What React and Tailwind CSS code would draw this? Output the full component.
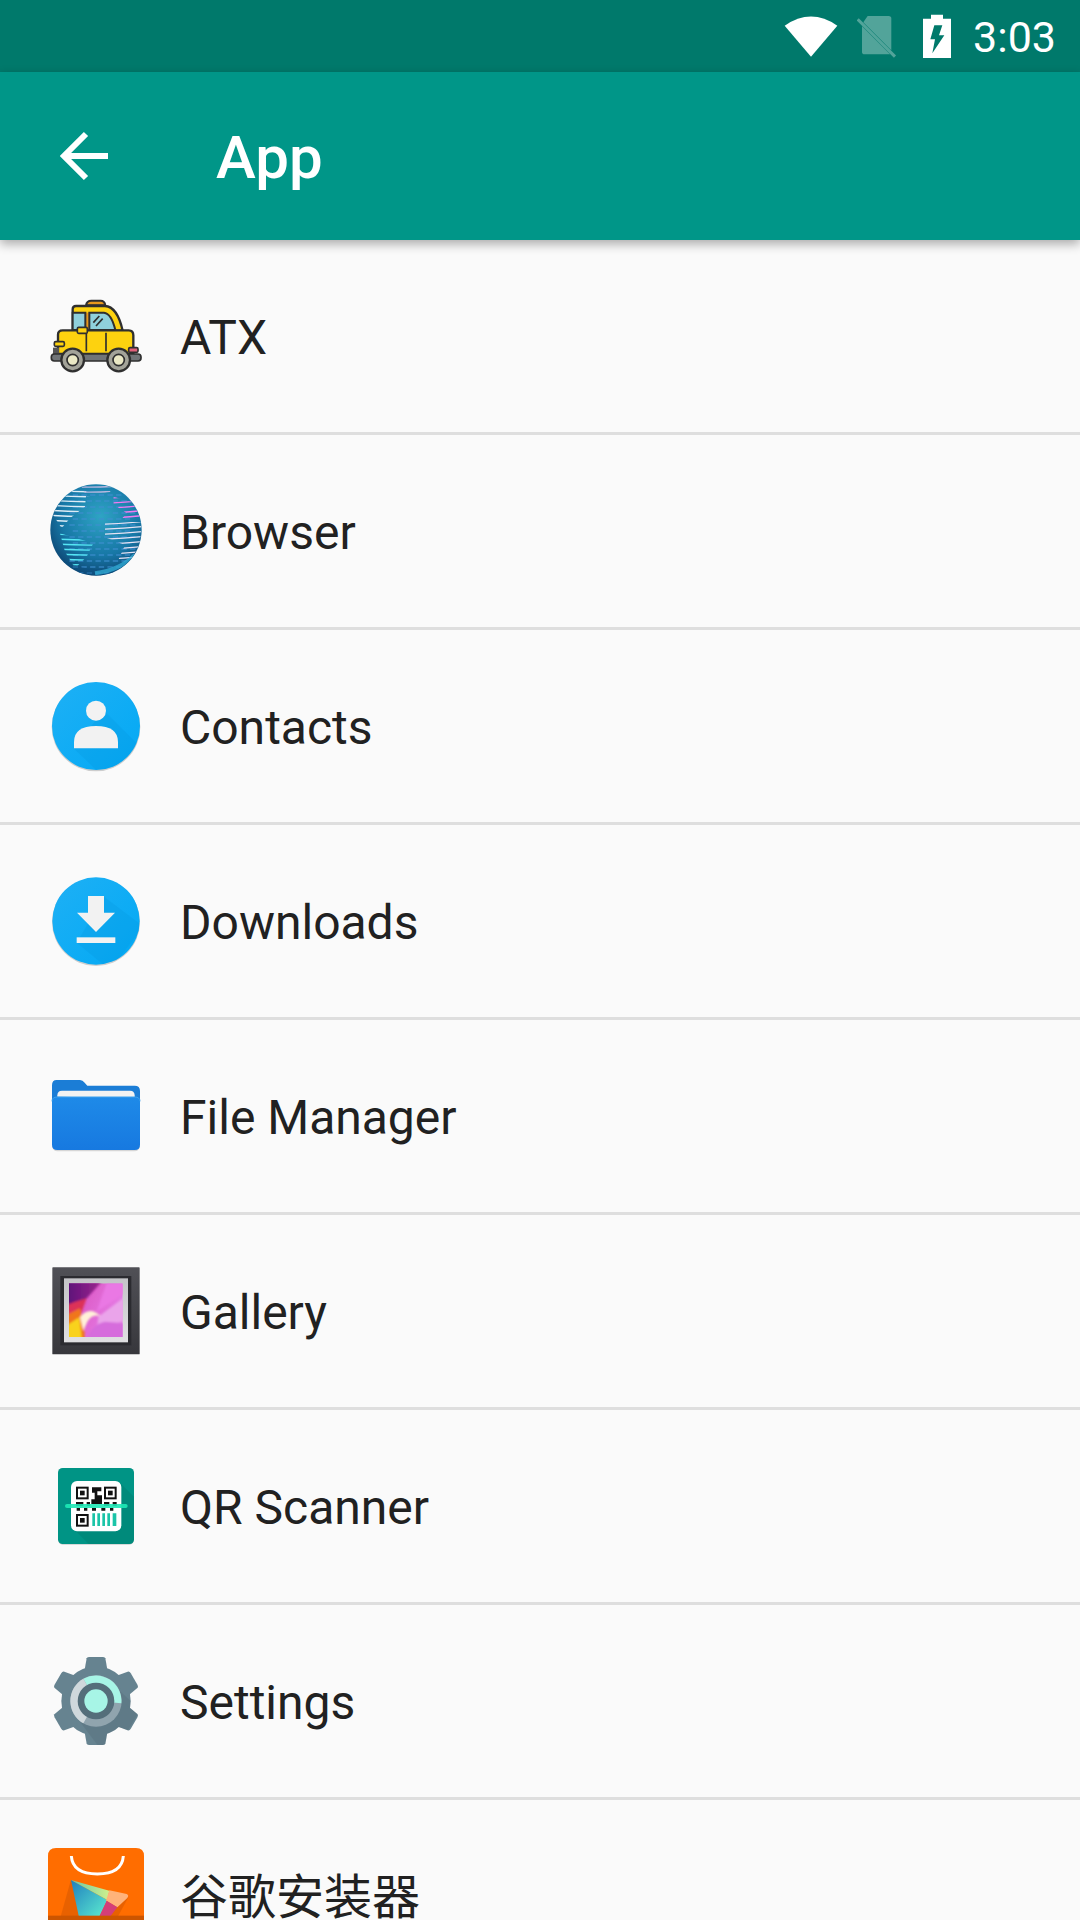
const FONT = 'font-["Roboto","Noto_Sans_CJK_SC",sans-serif]';

function Icon({ vb, children }) {
  return (
    <svg width="120" height="120" viewBox={vb} className="shrink-0 overflow-visible">
      {children}
    </svg>
  );
}

function Wifi() {
  return (
    <svg width="54" height="44" viewBox="0 0 162 132" className="shrink-0">
      <path d="M2 35 Q81 -20 160 35 L81 128 Z" fill="#fff" />
    </svg>
  );
}
function Sim() {
  return (
    <svg width="42" height="44" viewBox="0 0 126 132" className="shrink-0">
      <path d="M32 6 H95 Q103 6 103 14 V109 L19 25 Z" fill="#fff" fillOpacity="0.32" />
      <path d="M15 37 L99 121 H23 Q15 121 15 113 Z" fill="#fff" fillOpacity="0.32" />
      <path d="M2 16 L114 128" stroke="#fff" strokeOpacity="0.32" strokeWidth="9" />
    </svg>
  );
}
function Battery() {
  return (
    <svg width="28" height="44" viewBox="0 0 84 132" className="shrink-0">
      <path d="M0 14 H24 V2 H60 V14 H84 V132 H0 Z" fill="#fff" />
      <path d="M34 34 H58 L48 64 H64 L28 118 L36 76 H22 Z" fill="#00796b" />
    </svg>
  );
}

function Taxi() {
  const s = "#2f2f2f";
  return (
    <Icon vb="18 -12 360 360">
      <path d="M168 76 Q170 62 184 62 H212 Q224 62 226 76 Z" fill="#e8981d" stroke={s} strokeWidth="6" />
      <path d="M128 152 V88 Q128 78 138 78 H225 Q262 80 278 152 Z" fill="#fdd20f" stroke={s} strokeWidth="7" />
      <path d="M164 150 V98 H178 V150 Z" fill="#e8981d" />
      <path d="M128 98 H166 V150 H128 Z" fill="#8fd0dc" stroke={s} strokeWidth="6" />
      <path d="M178 98 H222 Q244 100 256 150 H178 Z" fill="#8fd0dc" stroke={s} strokeWidth="6" />
      <path d="M190 128 L208 108 M198 138 L218 116" stroke={s} strokeWidth="5" />
      <path d="M84 222 V164 Q84 151 98 151 H296 Q310 151 310 166 V222 Z" fill="#fdd20f" stroke={s} strokeWidth="7" />
      <path d="M169 158 V214 M228 158 V214" stroke={s} strokeWidth="5" />
      <rect x="142" y="142" width="30" height="18" rx="4" fill="#fdd20f" stroke={s} strokeWidth="5" />
      <rect x="73" y="185" width="30" height="14" rx="4" fill="#fdd20f" stroke={s} strokeWidth="5" />
      <rect x="296" y="203" width="28" height="14" rx="4" fill="#e0607a" stroke={s} strokeWidth="5" />
      <rect x="69" y="203" width="18" height="20" fill="#555" />
      <rect x="64" y="222" width="269" height="21" rx="9" fill="#707477" stroke={s} strokeWidth="5" />
      <circle cx="128" cy="240" r="34" fill="#a3a399" stroke={s} strokeWidth="7" />
      <circle cx="128" cy="240" r="17" fill="#ebe9c5" stroke={s} strokeWidth="5" />
      <circle cx="266" cy="240" r="34" fill="#a3a399" stroke={s} strokeWidth="7" />
      <circle cx="266" cy="240" r="17" fill="#ebe9c5" stroke={s} strokeWidth="5" />
    </Icon>
  );
}

function Stripes({ clip, from, to, color }) {
  const ys = [];
  for (let y = from; y <= to; y += 15) ys.push(y);
  return (
    <g clipPath={`url(#${clip})`}>
      {ys.map((y) => (
        <path key={y} d={`M50 ${y - 2} Q198 ${y + 10} 346 ${y - 6}`} stroke={color} strokeWidth="4" fill="none" />
      ))}
    </g>
  );
}

function Globe() {
  const dots = [];
  for (let y = 645; y < 880; y += 18) {
    for (let x = 110 + ((y / 18) % 2) * 10; x < 310; x += 26) {
      dots.push([x, y]);
    }
  }
  return (
    <Icon vb="18 573 360 360">
      <defs>
        <radialGradient id="gl" cx="0.55" cy="0.35" r="0.72">
          <stop offset="0" stopColor="#2ea4c4" />
          <stop offset="0.6" stopColor="#1777a6" />
          <stop offset="1" stopColor="#0b3a66" />
        </radialGradient>
        <clipPath id="gc"><circle cx="198" cy="750" r="136" /></clipPath>
        <clipPath id="g1"><path d="M130 628 L170 628 L165 680 L120 715 L95 745 L66 700 L90 650 Z" /></clipPath>
        <clipPath id="g2"><path d="M90 760 L190 790 L170 830 L135 865 L105 815 Z" /></clipPath>
        <clipPath id="g3"><path d="M250 650 L322 670 L335 722 L270 722 L290 700 L250 672 Z" /></clipPath>
        <clipPath id="g4"><path d="M225 726 L335 726 L330 790 L300 848 L265 840 L285 795 L225 772 Z" /></clipPath>
        <clipPath id="g5"><path d="M150 612 L250 612 L240 636 L170 650 Z" /></clipPath>
      </defs>
      <circle cx="198" cy="750" r="137" fill="url(#gl)" />
      <g clipPath="url(#gc)">
        {dots.map(([x, y], i) => (
          <path key={i} d={`M${x} ${y}h16`} stroke="#3f8fd0" strokeWidth="4" strokeOpacity="0.75" />
        ))}
        <Stripes clip="g1" from={632} to={745} color="#dcecf6" />
        <Stripes clip="g2" from={762} to={865} color="#55e6f4" />
        <Stripes clip="g3" from={652} to={722} color="#f07af0" />
        <Stripes clip="g4" from={730} to={850} color="#e6e2f4" />
        <Stripes clip="g5" from={618} to={650} color="#b8b8e0" />
        <path d="M62 810 Q200 925 334 810 V900 H62 Z" fill="#0d4f83" fillOpacity="0.4" />
        <path d="M195 880 Q270 870 315 825" stroke="#35b4dc" strokeWidth="12" fill="none" strokeOpacity="0.7" />
      </g>
    </Icon>
  );
}

function Contacts() {
  return (
    <Icon vb="18 18 360 360">
      <defs>
        <linearGradient id="cg" x1="0" y1="0" x2="1" y2="1">
          <stop offset="0" stopColor="#1eb0f5" />
          <stop offset="1" stopColor="#03a9f4" />
        </linearGradient>
        <clipPath id="cc"><circle cx="198" cy="198" r="132" /></clipPath>
      </defs>
      <circle cx="198" cy="201" r="133" fill="#000" fillOpacity="0.18" />
      <circle cx="198" cy="198" r="132" fill="url(#cg)" />
      <path d="M132 266 L220 150 L340 270 L220 350 Z" fill="#0288d1" fillOpacity="0.18" clipPath="url(#cc)" />
      <circle cx="198" cy="152" r="30" fill="#f2f2f2" />
      <path d="M132 265 V246 Q132 198 198 198 Q264 198 264 246 V265 Z" fill="#f2f2f2" />
    </Icon>
  );
}

function Downloads() {
  return (
    <Icon vb="18 603 360 360">
      <defs>
        <linearGradient id="dg" x1="0" y1="0" x2="1" y2="1">
          <stop offset="0" stopColor="#1eb0f5" />
          <stop offset="1" stopColor="#03a9f4" />
        </linearGradient>
        <clipPath id="dc"><circle cx="198" cy="783" r="131" /></clipPath>
      </defs>
      <circle cx="198" cy="786" r="132" fill="#000" fillOpacity="0.18" />
      <circle cx="198" cy="783" r="131" fill="url(#dg)" />
      <path d="M140 848 L222 710 L340 800 L240 930 Z" fill="#0288d1" fillOpacity="0.18" clipPath="url(#dc)" />
      <path d="M174 708 H222 V758 H255 L198 816 L141 758 H174 Z" fill="#f2f2f2" />
      <rect x="140" y="832" width="116" height="17" fill="#f2f2f2" />
    </Icon>
  );
}

function Folder() {
  return (
    <Icon vb="18 -12 360 360">
      <defs>
        <linearGradient id="fg" x1="0" y1="0" x2="0" y2="1">
          <stop offset="0" stopColor="#1e8ae8" />
          <stop offset="1" stopColor="#1779e0" />
        </linearGradient>
      </defs>
      <rect x="66" y="114" width="264" height="160" rx="16" fill="#000" fillOpacity="0.14" />
      <path d="M66 76 Q66 60 80 60 H150 Q158 60 164 68 L172 77 H314 Q330 77 330 93 V200 H66 Z" fill="#1b7dd6" />
      <path d="M82 110 V106 Q82 92 96 92 H300 Q314 92 314 106 V114 Z" fill="#f2f2f2" />
      <path d="M66 126 Q66 111 82 111 H314 Q330 111 330 126 V254 Q330 270 314 270 H82 Q66 270 66 254 Z" fill="url(#fg)" />
      <path d="M66 124 Q66 111 82 111 H314 Q330 111 330 124" stroke="#3aa0ee" strokeWidth="3" fill="none" />
    </Icon>
  );
}

function Gallery() {
  return (
    <Icon vb="18 573 360 360">
      <defs>
        <linearGradient id="gf" x1="0" y1="0" x2="0" y2="1">
          <stop offset="0" stopColor="#505056" />
          <stop offset="1" stopColor="#37373c" />
        </linearGradient>
        <linearGradient id="gs" x1="0" y1="0" x2="0" y2="1">
          <stop offset="0" stopColor="#c4c4c8" />
          <stop offset="1" stopColor="#e0e0e2" />
        </linearGradient>
        <linearGradient id="gp" x1="0" y1="0" x2="1" y2="0.5">
          <stop offset="0" stopColor="#d84cb8" />
          <stop offset="1" stopColor="#e67ee8" />
        </linearGradient>
        <linearGradient id="gd" x1="0" y1="0" x2="1" y2="0">
          <stop offset="0" stopColor="#5b0f78" />
          <stop offset="1" stopColor="#a02a90" />
        </linearGradient>
        <filter id="gb"><feGaussianBlur stdDeviation="2.5" /></filter>
        <clipPath id="gk"><rect x="117" y="670" width="161" height="161" /></clipPath>
      </defs>
      <rect x="67" y="622" width="262" height="261" rx="2" fill="url(#gf)" />
      <rect x="91" y="648" width="213" height="208" fill="#2b2b30" />
      <rect x="102" y="655" width="192" height="192" fill="url(#gs)" />
      <g clipPath="url(#gk)">
        <rect x="117" y="670" width="161" height="161" fill="url(#gp)" />
        <g filter="url(#gb)">
          <path d="M110 662 H218 L170 715 L135 750 L110 775 Z" fill="url(#gd)" />
          <path d="M110 735 Q135 725 170 715 L150 770 L110 785 Z" fill="#dc3358" />
          <path d="M110 765 L150 745 L162 800 L165 840 H110 Z" fill="#f0761c" />
          <path d="M112 795 L148 772 L156 840 H112 Z" fill="#f9d21a" />
          <path d="M150 772 Q178 735 214 770 Q188 758 172 785 L160 812 Z" fill="#fff1d8" />
          <path d="M230 670 H285 V700 L200 755 Z" fill="#ea78e4" />
          <path d="M205 770 L285 710 V780 L200 815 Z" fill="#eaa4ea" />
          <path d="M170 835 Q190 790 225 785 L285 790 V840 Z" fill="#d66cdc" />
        </g>
      </g>
    </Icon>
  );
}

function Qr() {
  const finder = (x, y) => (
    <g>
      <rect x={x} y={y} width="38" height="38" fill="#111" />
      <rect x={x + 6} y={y + 6} width="26" height="26" fill="#fff" />
      <rect x={x + 12} y={y + 12} width="14" height="14" fill="#111" />
    </g>
  );
  return (
    <Icon vb="18 18 360 360">
      <rect x="84" y="86" width="228" height="228" rx="14" fill="#000" fillOpacity="0.18" />
      <rect x="84" y="84" width="228" height="228" rx="14" fill="#009485" />
      <path d="M130 266 L270 128 L312 170 V298 Q312 312 298 312 H176 Z" fill="#00796b" fillOpacity="0.35" />
      <rect x="123" y="123" width="151" height="151" rx="18" fill="#fff" />
      {finder(138, 140)}
      {finder(222, 140)}
      {finder(138, 222)}
      <path d="M186 142 H214 V154 H202 V166 H216 V192 H184 V178 H194 V158 H186 Z" fill="#111" />
      <path d="M138 186 H160 V198 H138 Z M170 186 H180 V198 H170 Z M222 186 H238 V198 H222 Z M248 186 H260 V198 H248 Z" fill="#111" />
      <path d="M140 204 H150 V212 H140 Z M162 204 H172 V212 H162 Z M186 204 H198 V212 H186 Z M214 204 H226 V212 H214 Z M240 204 H250 V212 H240 Z" fill="#111" />
      <path d="M187 220h8v38h-8z M202 220h8v38h-8z M217 220h8v38h-8z M232 220h8v38h-8z M248 220h11v38h-11z" fill="#1cc4a8" />
      <rect x="105" y="192" width="188" height="12" rx="6" fill="#1de9b6" fillOpacity="0.9" />
    </Icon>
  );
}

function Gear() {
  const tooth = "M170 655 Q172 651 178 651 H218 Q224 651 226 655 L234 700 H162 Z";
  const angles = [0, 60, 120, 180, 240, 300];
  return (
    <Icon vb="18 603 360 360">
      <defs>
        <clipPath id="gr">
          <circle cx="198" cy="783" r="104" />
          {angles.map((a) => (
            <path key={a} d={tooth} transform={`rotate(${a} 198 783)`} />
          ))}
        </clipPath>
      </defs>
      <circle cx="198" cy="783" r="104" fill="#668390" />
      {angles.map((a) => (
        <path key={a} d={tooth} fill="#668390" transform={`rotate(${a} 198 783)`} />
      ))}
      <path d="M150 845 L245 730 L330 810 L262 925 L210 925 Z" fill="#455a64" fillOpacity="0.2" clipPath="url(#gr)" />
      <circle cx="198" cy="783" r="77" fill="#90a4ae" />
      <path d="M160 716 A77 77 0 0 1 274 790 L198 783 Z" fill="#a7f5e6" />
      <path d="M160 716 A77 77 0 0 0 160 850 L198 783 Z" fill="#cfd8dc" />
      <circle cx="198" cy="783" r="55" fill="#546e7a" />
      <circle cx="198" cy="783" r="35" fill="#a7f5e6" />
    </Icon>
  );
}

function Market() {
  return (
    <Icon vb="18 48 360 360">
      <defs>
        <linearGradient id="p1" x1="0" y1="0" x2="1" y2="1">
          <stop offset="0" stopColor="#1f7fbf" />
          <stop offset="1" stopColor="#5ff0d0" />
        </linearGradient>
        <linearGradient id="p2" x1="0" y1="0" x2="1" y2="0">
          <stop offset="0" stopColor="#69c8a8" />
          <stop offset="1" stopColor="#d0f08c" />
        </linearGradient>
      </defs>
      <path d="M54 108 Q54 84 78 84 H318 Q342 84 342 108 V372 H54 Z" fill="#ff6d00" />
      <path d="M124 108 Q128 162 202 162 Q276 162 280 108" stroke="#fff" strokeWidth="9" fill="none" />
      <path d="M122 182 L90 296 H260 L296 230 Z" fill="#d85a00" fillOpacity="0.6" />
      <path d="M123 180 L232 240 L205 296 H148 Z" fill="url(#p1)" />
      <path d="M123 180 L238 212 L232 240 Z" fill="url(#p2)" />
      <path d="M238 211 L290 222 Q298 226 292 234 L262 262 L228 242 Z" fill="#ffb37a" />
      <path d="M230 242 L262 262 L240 290 L205 296 Z" fill="#d43f78" />
      <rect x="54" y="287" width="288" height="20" fill="#cc5500" />
    </Icon>
  );
}

const rows = [
  ["ATX", Taxi],
  ["Browser", Globe],
  ["Contacts", Contacts],
  ["Downloads", Downloads],
  ["File Manager", Folder],
  ["Gallery", Gallery],
  ["QR Scanner", Qr],
  ["Settings", Gear],
  ["谷歌安装器", Market],
];

export default function App() {
  return (
    <div className={`w-[1080px] h-[1920px] overflow-hidden bg-[#fafafa] flex flex-col ${FONT}`}>
      <div className="h-[72px] shrink-0 bg-[#00796b] flex items-center justify-end pr-[24px] text-white">
        <Wifi />
        <div className="w-[19px]" />
        <Sim />
        <div className="w-[24px]" />
        <Battery />
        <span className="ml-[22px] pt-[2px] text-[43px] leading-none">3:03</span>
      </div>
      <div className="relative z-10 h-[168px] shrink-0 bg-[#009688] flex items-center shadow-[0_4px_10px_rgba(0,0,0,0.32)]">
        <svg width="54" height="54" viewBox="0 0 162 162" className="ml-[58px] shrink-0">
          <path d="M150 81 H18 M84 15 L18 81 L84 147" stroke="#fff" strokeWidth="18" fill="none" />
        </svg>
        <span className="ml-[104px] pt-[4px] text-[60px] font-medium text-white leading-none">App</span>
      </div>
      <div className="flex flex-col">
        {rows.map(([label, Ico]) => (
          <div key={label} className="h-[195px] shrink-0 border-b-[3px] border-[#dedede] flex items-center pl-[36px]">
            <Ico />
            <span className="ml-[24px] pt-[4px] text-[48px] leading-none text-[#212121] whitespace-nowrap">{label}</span>
          </div>
        ))}
      </div>
    </div>
  );
}
